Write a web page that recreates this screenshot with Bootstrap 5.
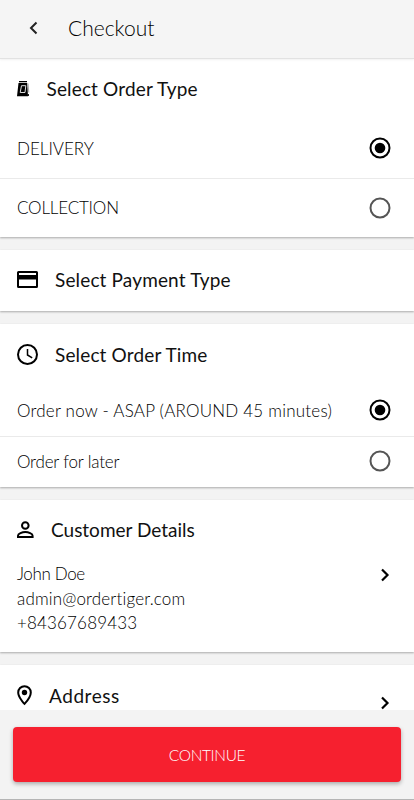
<!DOCTYPE html>
<html lang="en">
<head>
<meta charset="utf-8">
<meta name="viewport" content="width=device-width, initial-scale=1">
<title>Checkout</title>
<link rel="stylesheet" href="https://cdn.jsdelivr.net/npm/bootstrap@5.3.0/dist/css/bootstrap.min.css">
<style>
html,body{height:100%}
body{background:#f3f3f3;color:#000;font-family:Lato,"Open Sans",sans-serif;font-weight:300;font-size:17px;line-height:24.5px;overflow:hidden}
svg{display:block;flex:none}
.app{height:800px}
.topbar{height:59px;background:#f5f5f5;padding:0 0 3px 27px;flex:none;border-bottom:1px solid #e2e2e2;box-shadow:0 1px 2px rgba(0,0,0,.06);z-index:1}
.topbar h1{font-size:21px;font-weight:300;line-height:28px;margin-left:27px}
.panel{background:#fff;box-shadow:0 1px 2px rgba(0,0,0,.3);flex:none}
.panel h2{font-size:19px;font-weight:400;line-height:26px;letter-spacing:.15px;color:#111}
.type-panel{height:178px}
.type-panel .heading{height:60px}
.type-panel .choice{height:59px}
.type-panel .choice span{padding-top:2px}
.pay-panel{height:61.5px;padding-bottom:1px}
.time-panel{height:163.5px}
.time-panel .heading{height:62px}
.time-panel .choice{height:50.5px}
.time-panel .choice span{padding-top:2px}
.choice{padding:0 23px 1px 17px}
.choice+.choice{border-top:1px solid #eaeaea}
.heading{padding-left:17px}
.customer{height:152.5px}
.customer .heading{height:61px}
.customer .details{padding:1.5px 0 0 17px}
.address{height:100px}
.address .heading{height:62px}
.stack{gap:12.5px;min-height:0}
.next{margin-right:23.5px}
.wide{letter-spacing:.22px}
.mid{letter-spacing:.16px}
.tight{letter-spacing:-.18px}
.tighter{letter-spacing:-.35px}
.panel h2.short{letter-spacing:.55px}
.panel h2.flat{letter-spacing:0}
.bottom{height:90px;background:#f3f3f3;padding:17px 13px 0;border-bottom:1px solid #b5b5b5;flex:none;z-index:2}
.bottom .btn{height:55px;background:#f6202f;border:0;border-radius:4px;color:#fff;font-size:15.5px;font-weight:300;letter-spacing:-.35px;padding-top:8px;box-shadow:0 2px 4px rgba(0,0,0,.3)}
</style>
<script src="https://cdn.jsdelivr.net/npm/bootstrap@5.3.0/dist/js/bootstrap.bundle.min.js"></script>
</head>
<body>
<div class="app d-flex flex-column overflow-hidden">
  <header class="topbar d-flex align-items-center position-relative">
    <svg width="14" height="14" viewBox="0 0 14 14" fill="none" stroke="#222" stroke-width="2"><path d="M9.500 1.500 4 7l5.500 5.500"/></svg>
    <h1 class="mb-0">Checkout</h1>
  </header>
  <main class="stack d-flex flex-column flex-grow-1 overflow-hidden">
    <section class="panel type-panel">
      <div class="heading d-flex align-items-center">
        <svg width="13" height="16" viewBox="0 0 13 16"><path d="M2 0h8v1.200H2zM1.500 2h8.700L11 15.200H0z"/><path d="M4.500 4.700h4.300l-.8 6.800H3.200z" fill="none" stroke="#ddd"/><path d="m11 2.500.8 9" stroke="#aaa"/><path d="M11.500 13v2" stroke="#222"/></svg>
        <h2 class="mb-0" style="margin-left:16.500px">Select Order Type</h2>
      </div>
      <div class="choice d-flex align-items-center justify-content-between"><span>DELIVERY</span>
        <svg width="22" height="22" viewBox="0 0 22 22"><circle cx="11" cy="11" r="9.500" fill="none" stroke="#000" stroke-width="2"/><circle cx="11" cy="11" r="5.300"/></svg></div>
      <div class="choice d-flex align-items-center justify-content-between"><span class="tight">COLLECTION</span>
        <svg width="22" height="22" viewBox="0 0 22 22"><circle cx="11" cy="11" r="9.500" fill="none" stroke="#555" stroke-width="2"/></svg></div>
    </section>
    <section class="panel pay-panel heading d-flex align-items-center">
      <svg width="22" height="18" viewBox="0 0 22 18"><path fill-rule="evenodd" d="M1.500 0h18A1.500 1.500 0 0 1 21 1.500v14a1.500 1.500 0 0 1-1.500 1.500h-18A1.500 1.500 0 0 1 0 15.500v-14A1.500 1.500 0 0 1 1.500 0zM2 2v2h17V2zM2 8.500V15h17V8.500z"/></svg>
      <h2 class="mb-0" style="margin-left:16px">Select Payment Type</h2>
    </section>
    <section class="panel time-panel">
      <div class="heading d-flex align-items-center">
        <svg width="22" height="22" viewBox="0 0 22 22" fill="none" stroke="#000"><circle cx="10.500" cy="10.500" r="9.500" stroke-width="2"/><path d="M10.500 5v6l4.700 2.800" stroke-width="1.500"/></svg>
        <h2 class="mb-0" style="margin-left:16px">Select Order Time</h2>
      </div>
      <div class="choice d-flex align-items-center justify-content-between"><span class="wide">Order now - ASAP (AROUND 45 minutes)</span>
        <svg width="22" height="22" viewBox="0 0 22 22"><circle cx="11" cy="11" r="9.500" fill="none" stroke="#000" stroke-width="2"/><circle cx="11" cy="11" r="5.300"/></svg></div>
      <div class="choice d-flex align-items-center justify-content-between"><span class="tight">Order for later</span>
        <svg width="22" height="22" viewBox="0 0 22 22"><circle cx="11" cy="11" r="9.500" fill="none" stroke="#555" stroke-width="2"/></svg></div>
    </section>
    <section class="panel customer">
      <div class="heading d-flex align-items-center">
        <svg width="17" height="18" viewBox="0 0 17 18" fill="none" stroke="#000" stroke-width="2"><circle cx="8.300" cy="4.500" r="3.300"/><path d="M1 16v-1.300c0-2 4.200-3.700 7.300-3.700s7.300 1.700 7.300 3.700V16z"/></svg>
        <h2 class="flat mb-0" style="margin-left:17px">Customer Details</h2>
      </div>
      <div class="details d-flex justify-content-between">
        <div><div class="tighter">John Doe</div><div class="mid">admin@ordertiger.com</div><div class="mid">+84367689433</div></div>
        <svg class="next" style="margin-top:6px" width="12" height="14" viewBox="0 0 12 14" fill="none" stroke="#000" stroke-width="2.200"><path d="m3 1.500 5.500 5.500L3 12.500"/></svg>
      </div>
    </section>
    <section class="panel address">
      <div class="d-flex justify-content-between">
        <div class="heading d-flex align-items-center">
          <svg width="16" height="21" viewBox="0 0 16 21"><path d="M7.500 1.200a6.300 6.300 0 0 0-6.300 6.300c0 4.800 6.300 11.400 6.300 11.400s6.300-6.600 6.300-11.400a6.300 6.300 0 0 0-6.300-6.300z" fill="none" stroke="#000" stroke-width="2"/><circle cx="7.500" cy="7.500" r="2.700"/></svg>
          <h2 class="short mb-0" style="margin-left:16px">Address</h2>
        </div>
        <svg class="next" style="margin-top:31px" width="12" height="14" viewBox="0 0 12 14" fill="none" stroke="#000" stroke-width="2.200"><path d="m3 1.500 5.500 5.500L3 12.500"/></svg>
      </div>
    </section>
  </main>
  <footer class="bottom position-relative"><button class="btn w-100" type="button">CONTINUE</button></footer>
</div>
</body>
</html>
